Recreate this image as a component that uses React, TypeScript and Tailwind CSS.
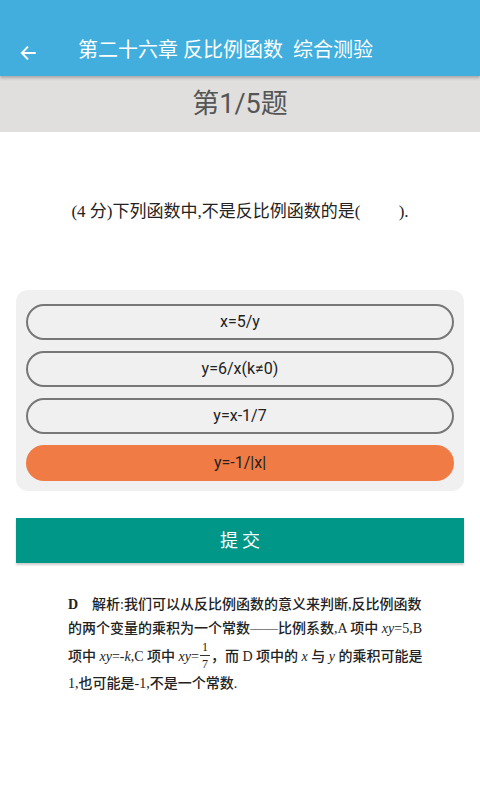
import React from "react";

const cjk = '"Roboto", "Noto Sans CJK SC", sans-serif';
const serif = '"Liberation Serif", "Noto Sans CJK SC", serif';

function Frac() {
  return (
    <span className="inline-flex flex-col items-center align-middle mx-[1px] leading-none text-[12px] relative top-[-1px]">
      <span className="px-[2px]">1</span>
      <span className="w-[10px] h-[1px] bg-[#333] my-[2px]" />
      <span className="px-[2px]">7</span>
    </span>
  );
}

export default function App() {
  const opts = ["x=5/y", "y=6/x(k≠0)", "y=x-1/7", "y=-1/|x|"];
  const line = "[text-align:justify] [text-align-last:justify] whitespace-nowrap";
  return (
    <div className="w-[480px] h-[800px] bg-white overflow-hidden" style={{ fontFamily: cjk }}>
      <div className="h-[76px] bg-[#41aedd] flex items-end pb-[14px] relative z-10 shadow-[0_2px_3px_rgba(0,0,0,0.25)]">
        <div className="w-[78px] flex items-center pl-[19px]">
          <svg width="18" height="18" viewBox="0 0 24 24" fill="none" stroke="white" strokeWidth="2.6" strokeLinecap="square">
            <path d="M21 12H4M11 4.5L3.8 12l7.2 7.5" />
          </svg>
        </div>
        <div className="text-white text-[20px] leading-[24px] whitespace-pre">第二十六章 反比例函数  综合测验</div>
      </div>
      <div className="h-[56px] bg-[#e0dfde] flex items-center justify-center">
        <span className="text-[27px] text-[#555] leading-none">第1/5题</span>
      </div>
      <div className="h-[158px] flex items-center justify-center pt-[2px]">
        <div className="text-[17px] text-[#222] whitespace-pre" style={{ fontFamily: serif }}>(4 分)下列函数中,不是反比例函数的是(　　 ).</div>
      </div>
      <div className="mx-[16px] bg-[#f0f0f0] rounded-[12px] px-[10px] pt-[14px] pb-[10px] flex flex-col gap-[11px]">
        {opts.map((o, i) => (
          <div
            key={o}
            className={
              "h-[36px] rounded-full flex items-center justify-center text-[16px] text-[#222] " +
              (i === 3 ? "bg-[#f07b44]" : "border-2 border-[#777] bg-[#f0f0f0]")
            }
          >
            {o}
          </div>
        ))}
      </div>
      <div className="mx-[16px] mt-[27px] h-[45px] bg-[#009688] flex items-center justify-center shadow-[0_2px_2px_rgba(0,0,0,0.2)]">
        <span className="text-white text-[18px] tracking-[4px] pl-[4px]">提交</span>
      </div>
      <div className="ml-[68px] w-[342px] mt-[30px] text-[14px] text-[#222] font-medium" style={{ fontFamily: serif }}>
        <div className={line + " h-[24px] leading-[24px]"}><b>D</b>　解析:我们可以从反比例函数的意义来判断,反比例函数</div>
        <div className={line + " h-[24px] leading-[24px]"}>的两个变量的乘积为一个常数——比例系数,A 项中 <i>xy</i>=5,B</div>
        <div className={line + " h-[30px] flex items-center justify-between"}>
          <span>项中 <i>xy</i>=-<i>k</i>,C 项中 <i>xy</i>=</span>
          <Frac />
          <span>，而 D 项中的 <i>x</i> 与 <i>y</i> 的乘积可能是</span>
        </div>
        <div className="h-[26px] leading-[26px] whitespace-nowrap">1,也可能是-1,不是一个常数.</div>
      </div>
    </div>
  );
}
